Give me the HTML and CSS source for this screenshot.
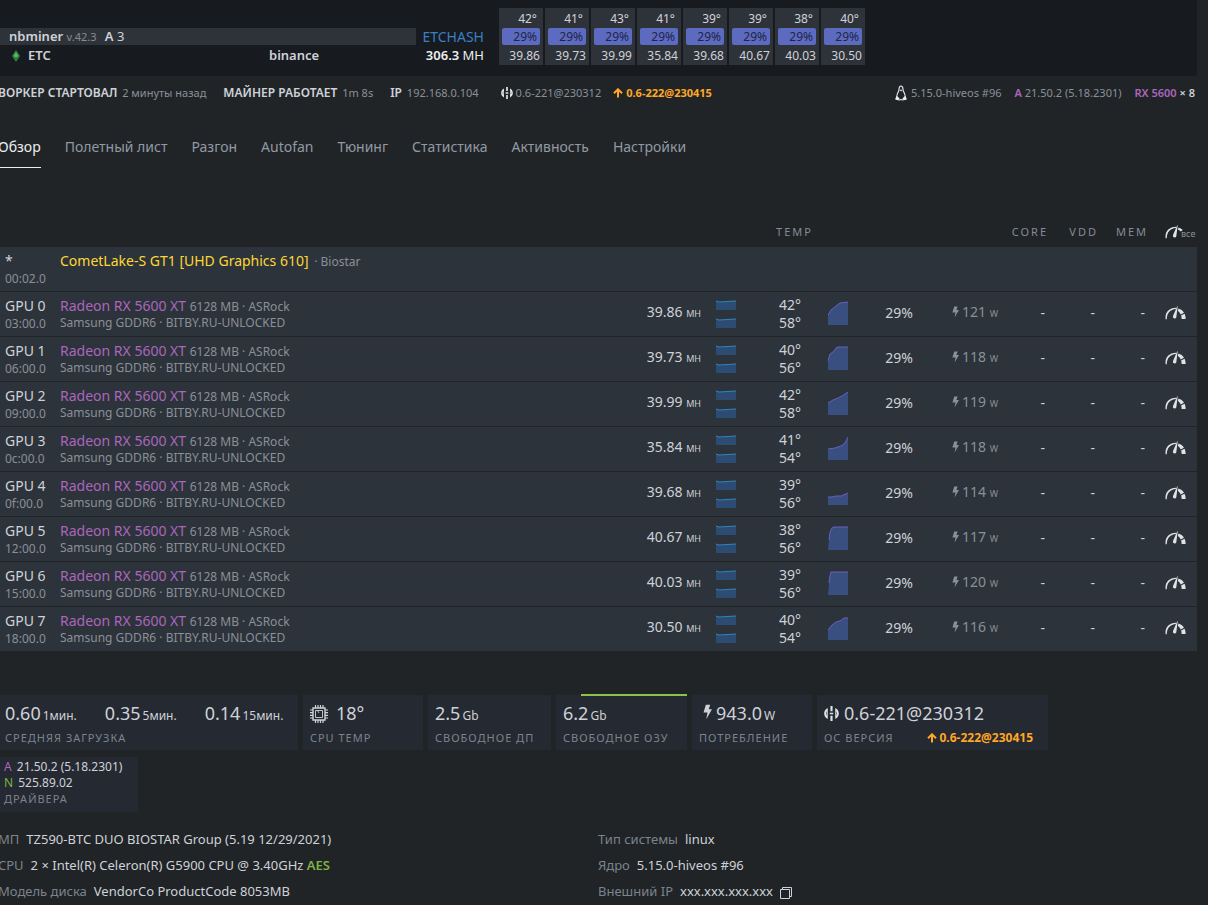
FILE: index.html
```
<!DOCTYPE html>
<html lang="ru">
<head>
    <meta charset="UTF-8">
    <meta name="viewport" content="width=device-width, initial-scale=1.0">
    <title>Hive OS | Воркер</title>
    <link rel="stylesheet" href="styles.css">
</head>
<body>
    <svg class="sprite" aria-hidden="true">
        <symbol id="i-hive" viewBox="0 0 14 14">
            <path d="M3.500 1.800V12.200C.6 10.600.2 8.600.2 7S.6 3.400 3.500 1.800zM2.600 5C1.900 6.400 1.900 7.600 2.600 9zM10.500 1.800V12.200C13.400 10.600 13.800 8.600 13.800 7S13.400 3.400 10.500 1.800zM11.400 5C12.100 6.400 12.100 7.600 11.400 9z" fill="currentColor" fill-rule="evenodd"/>
            <path d="M6 0h2v4.800H6zM6 9.200h2V14H6zM5.400 6.200h3.200v1.600H5.400z" fill="currentColor"/>
        </symbol>
        <symbol id="i-up" viewBox="0 0 10 10">
            <path d="M5 9.5V1.5M1 5.3L5 1.3l4 4" fill="none" stroke="currentColor" stroke-width="2"/>
        </symbol>
        <symbol id="i-bolt" viewBox="0 0 10 16">
            <path d="M3.2 0H8L6.4 5H10L3.6 16 5 8.6H.6z" fill="currentColor"/>
        </symbol>
        <symbol id="i-gauge" viewBox="0 0 22 16">
            <path d="M.6 14.500C-.2 7.500 4 2.800 11.600 2.600L11.400 3.900C5.600 4.400 2 8 1.900 14.500z" fill="currentColor"/>
            <path d="M13 .4L13.200 2 11.800 12.600A1.800 1.800 0 1 1 8.400 11.200z" fill="currentColor"/>
            <path d="M14 3.200C16.600 3.900 18.600 5.400 19.900 7.800L16.400 9.600C15.800 8 14.900 6.800 13.500 5.800zM20.400 8.900C21.200 10.400 21.600 12 21.600 14.200L17.400 14.400C17.400 12.800 17.200 11.800 16.800 10.700z" fill="currentColor"/>
        </symbol>
        <symbol id="i-gauge-all" viewBox="0 0 22 16">
            <path d="M.6 14.500C-.2 7.500 4 2.800 11.600 2.600L11.400 3.900C5.600 4.400 2 8 1.900 14.500z" fill="currentColor"/>
            <path d="M13 .4L13.200 2 11.800 12.600A1.800 1.800 0 1 1 8.400 11.200zM14 3.200C15.800 3.700 17.400 4.600 18.600 6L16.600 7.400C15.800 6.600 15 6 13.600 5.600z" fill="currentColor"/>
        </symbol>
        <symbol id="i-tux" viewBox="0 0 12 16">
            <path d="M6 1C3.600 1 4.200 4 3.800 5.600 3.200 7.600 1.800 9 1.800 11.500L1 14.200 4.400 15C5.400 14.400 6.600 14.400 7.600 15L11 14.200 10.200 11.500C10.200 9 8.800 7.600 8.200 5.600 7.800 4 8.400 1 6 1z" fill="none" stroke="currentColor" stroke-width="1.100"/>
            <path d="M4.400 4.800h3.200L6 6.600zM2 11l2.600 2.600L3 15.200.4 14zM10 11l-2.600 2.600L9 15.200l2.600-1.200z" fill="currentColor"/>
        </symbol>
        <symbol id="i-cpu" viewBox="0 0 18 18">
            <path d="M3 3h12v12H3z" fill="none" stroke="currentColor" stroke-width="1.400"/>
            <path d="M5.500 5.500h7v7h-7zM7.500 5.500L9 8" fill="none" stroke="currentColor" stroke-width=".9"/>
            <path d="M5.500 0v3M8 0v3M10.500 0v3M13 0v3M5.500 15v3M8 15v3M10.500 15v3M13 15v3M0 5h3M0 7.700h3M0 10.300h3M0 13h3M15 5h3M15 7.700h3M15 10.300h3M15 13h3" stroke="currentColor" stroke-width="1.200"/>
        </symbol>
        <symbol id="i-copy" viewBox="0 0 12 12">
            <path d="M.5 2.500h9v9h-9zM2.500 2.500v-2h9v9h-2" fill="none" stroke="currentColor"/>
        </symbol>
    </svg>

    <div class="page">
        <header class="summary">
            <div class="miner">
                <div class="miner-name"><b>nbminer</b> <small>v.42.3</small> <span class="accepted"><b>A</b> 3</span></div>
                <div class="algo">ETCHASH</div>
                <div class="coin">
                    <svg class="etc" viewBox="0 0 8 12"><path d="M4 0l4 6-4 6-4-6z" fill="#2e7d3c"/><path d="M4 2l2.500 4L4 7.400 1.500 6z" fill="#5cb46a"/></svg>
                    <b class="ticker">ETC</b>
                    <b>binance</b>
                </div>
                <div class="rate"><b>306.3</b> MH</div>
            </div>
            <div class="gpu-cells" id="cells"></div>
        </header>

        <div class="infobar">
            <span class="fact"><b>ВОРКЕР СТАРТОВАЛ</b> 2 минуты назад</span>
            <span class="fact"><b>МАЙНЕР РАБОТАЕТ</b> 1m 8s</span>
            <span class="fact ip"><b>IP</b> 192.168.0.104</span>
            <span class="version"><svg class="hive"><use href="#i-hive"/></svg>0.6-221@230312</span>
            <a href="#upgrade" class="upgrade"><svg class="up"><use href="#i-up"/></svg>0.6-222@230415</a>
            <span class="kernel"><svg class="tux"><use href="#i-tux"/></svg>5.15.0-hiveos #96</span>
            <span class="driver"><b class="amd">A</b> 21.50.2 (5.18.2301)</span>
            <span class="cards"><b class="amd">RX 5600</b> <b>× 8</b></span>
        </div>

        <nav class="tabs">
            <a href="#overview" class="active">Обзор</a>
            <a href="#flight">Полетный лист</a>
            <a href="#oc">Разгон</a>
            <a href="#autofan">Autofan</a>
            <a href="#tuning">Тюнинг</a>
            <a href="#stats">Статистика</a>
            <a href="#activity">Активность</a>
            <a href="#settings">Настройки</a>
        </nav>

        <table class="gpus">
            <colgroup>
                <col class="c-id"><col><col class="c-hash"><col class="c-spark"><col class="c-temp"><col class="c-chart">
                <col class="c-fan"><col class="c-power"><col class="c-oc"><col class="c-oc"><col class="c-oc"><col class="c-tune">
            </colgroup>
            <thead>
                <tr>
                    <th></th><th></th><th></th><th></th><th class="temp">TEMP</th><th></th><th></th><th></th>
                    <th class="num">CORE</th><th class="num">VDD</th><th class="num">MEM</th>
                    <th class="tune"><button type="button" aria-label="Разогнать все"><svg class="gauge"><use href="#i-gauge-all"/></svg><small>все</small></button></th>
                </tr>
            </thead>
            <tbody id="gpuRows">
                <tr>
                    <td class="id">*<small>00:02.0</small></td>
                    <td class="onboard" colspan="11"><span class="igpu">CometLake-S GT1 [UHD Graphics 610]</span> <small>· Biostar</small></td>
                </tr>
            </tbody>
        </table>

        <section class="stats">
            <div class="stat load">
                <div class="value"><span>0.60<small>1мин.</small></span><span>0.35<small>5мин.</small></span><span>0.14<small>15мин.</small></span></div>
                <div class="label">СРЕДНЯЯ ЗАГРУЗКА</div>
            </div>
            <div class="stat">
                <div class="value"><svg class="cpu"><use href="#i-cpu"/></svg>18°</div>
                <div class="label">CPU TEMP</div>
            </div>
            <div class="stat disk">
                <div class="value">2.5<small>Gb</small></div>
                <div class="label">СВОБОДНОЕ ДП</div>
            </div>
            <div class="stat ram">
                <div class="meter"><div style="width: 81%"></div></div>
                <div class="value">6.2<small>Gb</small></div>
                <div class="label">СВОБОДНОЕ ОЗУ</div>
            </div>
            <div class="stat">
                <div class="value"><svg class="bolt"><use href="#i-bolt"/></svg>943.0<small>W</small></div>
                <div class="label">ПОТРЕБЛЕНИЕ</div>
            </div>
            <div class="stat os">
                <div class="value"><svg class="hive"><use href="#i-hive"/></svg>0.6-221@230312</div>
                <div class="label">ОС ВЕРСИЯ <a href="#upgrade" class="upgrade"><svg class="up"><use href="#i-up"/></svg>0.6-222@230415</a></div>
            </div>
            <div class="stat drivers">
                <div><span class="amd">A</span> 21.50.2 (5.18.2301)</div>
                <div><span class="nvidia">N</span> 525.89.02</div>
                <div class="label">ДРАЙВЕРА</div>
            </div>
        </section>

        <dl class="system">
            <div><dt>МП</dt><dd>TZ590-BTC DUO BIOSTAR Group (5.19 12/29/2021)</dd></div>
            <div><dt>Тип системы</dt><dd>linux</dd></div>
            <div><dt>CPU</dt><dd>2 × Intel(R) Celeron(R) G5900 CPU @ 3.40GHz <b class="nvidia">AES</b></dd></div>
            <div><dt>Ядро</dt><dd>5.15.0-hiveos #96</dd></div>
            <div><dt>Модель диска</dt><dd>VendorCo ProductCode 8053MB</dd></div>
            <div><dt>Внешний IP</dt><dd>xxx.xxx.xxx.xxx <button type="button" class="copy" aria-label="Копировать"><svg><use href="#i-copy"/></svg></button></dd></div>
        </dl>
    </div>

    <script>
        // head: температура в шапке, core/mem: температуры в таблице, line: график вентилятора
        const gpus = [
            { bus: '03:00.0', hash: '39.86', head: 42, core: 42, mem: 58, power: 121, line: '0,14 3,9 8,5 12,2 20,1' },
            { bus: '06:00.0', hash: '39.73', head: 41, core: 40, mem: 56, power: 118, line: '0,15 2,8 5,6 9,1 20,1' },
            { bus: '09:00.0', hash: '39.99', head: 43, core: 42, mem: 58, power: 119, line: '0,12 5,9 10,7 14,5 20,1' },
            { bus: '0c:00.0', hash: '35.84', head: 41, core: 41, mem: 54, power: 118, line: '0,13 7,12 13,10 17,7 20,1' },
            { bus: '0f:00.0', hash: '39.68', head: 39, core: 39, mem: 56, power: 114, line: '0,16 4,16 8,15 13,15 20,12' },
            { bus: '12:00.0', hash: '40.67', head: 39, core: 38, mem: 56, power: 117, line: '1,14 2,6 4,2 6,1 20,1' },
            { bus: '15:00.0', hash: '40.03', head: 38, core: 39, mem: 56, power: 120, line: '1,12 2,5 3,1 20,1' },
            { bus: '18:00.0', hash: '30.50', head: 40, core: 40, mem: 54, power: 116, line: '0,14 4,9 8,6 12,5 16,2 20,2' }
        ];

        function spark() {
            return `<svg class="spark" viewBox="0 0 20 10">
                <path class="area" d="M0 1L3 2 20 1V10H0z"/><path class="line" d="M0 1L3 2 20 1"/></svg>`;
        }

        function fanChart(line) {
            return `<svg class="fan-chart" viewBox="0 0 20 24">
                <polygon class="area" points="0,24 ${line} 20,24"/><polyline class="line" points="${line}"/></svg>`;
        }

        document.getElementById('cells').innerHTML = gpus.map(g => `
            <div class="cell"><span>${g.head}°</span><span class="fan">29%</span><span>${g.hash}</span></div>`).join('');

        document.getElementById('gpuRows').insertAdjacentHTML('beforeend', gpus.map((g, i) => `
            <tr>
                <td class="id">GPU ${i}<small>${g.bus}</small></td>
                <td class="model"><span class="amd">Radeon RX 5600 XT</span> <small>6128 MB · ASRock</small>
                    <small class="memory">Samsung GDDR6 · BITBY.RU-UNLOCKED</small></td>
                <td class="num">${g.hash} <small>MH</small></td>
                <td class="sparks">${spark()}${spark()}</td>
                <td class="temp">${g.core}°<br>${g.mem}°</td>
                <td>${fanChart(g.line)}</td>
                <td class="num">29%</td>
                <td class="num power"><svg class="bolt"><use href="#i-bolt"/></svg>${g.power} <small>W</small></td>
                <td class="num oc">-</td>
                <td class="num oc">-</td>
                <td class="num oc">-</td>
                <td class="tune"><button type="button" aria-label="Разгон GPU ${i}"><svg class="gauge"><use href="#i-gauge"/></svg></button></td>
            </tr>`).join(''));
    </script>
</body>
</html>
```
FILE: styles.css
```
* {
    box-sizing: border-box;
}
body {
    margin: 0;
    font-family: "Noto Sans", "Open Sans", sans-serif;
    font-size: 14px;
    line-height: 18px;
    background-color: #202427;
    color: #ced2d8;
    overflow-x: hidden;
}
b {
    font-weight: 600;
}
a {
    text-decoration: none;
}
button {
    padding: 0;
    border: none;
    background: none;
    color: inherit;
    font: inherit;
    cursor: pointer;
}
svg {
    flex: none;
}
.sprite {
    position: absolute;
    width: 0;
    height: 0;
}
.page {
    margin-left: -2px;
    margin-right: 11px;
}
.amd {
    color: #ab66bd;
}
.nvidia {
    color: #7cb342;
}

/* шапка */
.summary {
    display: flex;
    align-items: flex-end;
    gap: 15px;
    height: 76px;
    padding-bottom: 11px;
    background-color: #171a1e;
    font-size: 12px;
    line-height: 19px;
}
.miner {
    display: grid;
    grid-template-columns: 418px 68px;
    font-size: 13px;
}
.miner-name {
    height: 17px;
    margin-bottom: 1px;
    padding-left: 11px;
    background-color: #2e333a;
    line-height: 17px;
}
.miner small {
    color: #858b94;
    font-size: 11px;
}
.accepted {
    margin-left: 5px;
}
.algo {
    color: #3a7fc4;
    font-size: 14px;
    line-height: 17px;
    text-align: right;
}
.coin {
    display: flex;
    align-items: center;
    padding-left: 14px;
}
.etc {
    width: 8px;
    height: 12px;
    margin-right: 8px;
}
.ticker {
    width: 241px;
}
.rate {
    color: #eceff1;
    text-align: right;
}
.gpu-cells {
    display: flex;
    gap: 2px;
}
.cell {
    display: flex;
    flex-direction: column;
    width: 44px;
    padding-top: 1px;
    background-color: #2e333a;
    text-align: right;
}
.cell span {
    padding-right: 3px;
}
.cell .fan {
    height: 17px;
    margin: 0 3px 1px;
    border-radius: 2px;
    background-color: #5c6bc0;
    color: #20264a;
    line-height: 18px;
}
.cell span:first-child {
    padding-right: 6px;
}

/* строка состояния */
.infobar {
    display: flex;
    align-items: center;
    height: 34px;
    color: #8a9099;
    font-size: 11px;
    white-space: nowrap;
}
.infobar b:not(.amd) {
    color: #ced2d8;
}
.fact {
    margin-right: 17px;
}
.fact b {
    margin-right: 2px;
    font-size: 12px;
}
.ip {
    margin-right: 22px;
}
.hive {
    width: 12px;
    height: 12px;
    margin-right: 3px;
    color: #dfe2e6;
    vertical-align: -2px;
}
.up {
    width: 10px;
    height: 10px;
    margin-right: 3px;
    vertical-align: -1px;
}
.upgrade {
    color: #ffa726;
    font-size: 11px;
    font-weight: 700;
}
.version {
    margin-right: 12px;
}
.tux {
    width: 12px;
    height: 16px;
    margin-right: 4px;
    color: #eceff1;
    vertical-align: -4px;
}
.kernel {
    margin-left: auto;
}
.driver,
.cards {
    margin-left: 13px;
}
.cards {
    padding-right: 2px;
}

/* вкладки */
.tabs {
    display: flex;
    gap: 24px;
    height: 58px;
}
.tabs a {
    padding-top: 28px;
    color: #9299a3;
    white-space: nowrap;
}
.tabs .active {
    border-bottom: 1px solid #eceff1;
    color: #eceff1;
}

/* видеокарты */
.gpus {
    width: 100%;
    margin-top: 49px;
    border-spacing: 0;
    table-layout: fixed;
}
.c-id {
    width: 62px;
}
.c-hash {
    width: 100px;
}
.c-spark {
    width: 51px;
}
.c-temp {
    width: 76px;
}
.c-chart {
    width: 35px;
}
.c-fan {
    width: 50px;
}
.c-power {
    width: 85px;
}
.c-oc {
    width: 50px;
}
.c-tune {
    width: 49px;
}
.gpus th {
    height: 30px;
    padding: 0;
    color: #858b94;
    font-size: 11px;
    font-weight: 400;
    letter-spacing: 2px;
}
.gpus td {
    height: 45px;
    padding: 0 0 2px;
    background-color: #2d333a;
    border-bottom: 1px solid #202427;
}
.gpus small {
    color: #8a9099;
    font-size: 12px;
}
.gpus .id {
    padding: 2px 0 0 7px;
}
.id small {
    display: block;
}
.gpus .model {
    padding-bottom: 0;
    line-height: 17px;
}
.model .memory {
    display: block;
    line-height: 16px;
}
.gpus .onboard {
    padding-top: 5px;
    vertical-align: top;
}
.igpu {
    margin-right: 2px;
    color: #fdd835;
}
.gpus .num {
    text-align: right;
    white-space: nowrap;
}
.gpus .num small {
    color: inherit;
    font-size: 9px;
}
.gpus .oc {
    padding-right: 3px;
}
.gpus .sparks {
    padding: 0 0 0 15px;
}
.spark {
    display: block;
    width: 20px;
    height: 10px;
}
.spark + .spark {
    margin-top: 8px;
}
.spark .area {
    fill: #2d4c74;
}
.spark .line {
    fill: none;
    stroke: #2f86bd;
}
.gpus .temp {
    padding-bottom: 0;
    text-align: center;
}
.gpus th.temp {
    padding-left: 9px;
}
.fan-chart {
    display: block;
    width: 20px;
    height: 24px;
}
.fan-chart .area {
    fill: #394f80;
}
.fan-chart .line {
    fill: none;
    stroke: #685fc0;
}
.gpus .power {
    color: #8a9099;
}
.power .bolt {
    width: 7px;
    height: 12px;
    margin-right: 3px;
    vertical-align: -1px;
}
.gpus .tune {
    padding-left: 17px;
    text-align: left;
}
.tune button {
    display: flex;
    align-items: flex-end;
    color: #dfe2e6;
}
.gauge {
    width: 21px;
    height: 16px;
}
.tune small {
    margin-left: -5px;
    font-size: 9px;
    letter-spacing: 0;
    line-height: 12px;
}

/* показатели */
.stats {
    display: flex;
    flex-wrap: wrap;
    gap: 7px 5px;
    margin-top: 43px;
    padding-right: 60px;
}
.stat {
    width: 120px;
    height: 55px;
    padding: 7px 7px 0;
    background-color: #252931;
    white-space: nowrap;
}
.value {
    height: 22px;
    font-size: 18px;
    line-height: 22px;
}
.value small {
    margin-left: 2px;
    font-size: 12px;
}
.label {
    color: #7d838c;
    font-size: 11px;
    letter-spacing: 1px;
    line-height: 28px;
}
.load {
    width: 300px;
}
.load .value {
    display: flex;
    gap: 28px;
}
.disk {
    width: 123px;
}
.ram {
    width: 131px;
}
.meter {
    margin: -8px -7px 6px;
}
.meter div {
    height: 2px;
    margin-left: auto;
    background-color: #8bc34a;
}
.os {
    width: 231px;
}
.cpu {
    width: 18px;
    height: 18px;
    margin-right: 8px;
    vertical-align: -3px;
}
.value .bolt {
    width: 9px;
    height: 16px;
    margin: 0 4px;
}
.value .hive {
    width: 15px;
    height: 15px;
    margin-right: 5px;
    vertical-align: -1px;
}
.os .label {
    display: flex;
    justify-content: space-between;
    padding-right: 8px;
}
.label .upgrade {
    font-size: 12px;
    letter-spacing: 0;
}
.drivers {
    width: 140px;
    padding: 2px 6px 0;
    font-size: 12px;
    line-height: 16px;
}
.drivers span {
    margin-right: 2px;
}
.drivers .label {
    line-height: 16px;
}

/* система */
.system {
    display: grid;
    grid-template-columns: 1fr 1fr;
    gap: 8px 1px;
    margin: 18px 0 4px;
    font-size: 13px;
}
.system div {
    display: flex;
    gap: 7px;
}
.system dt {
    color: #7d838c;
}
.system dd {
    margin: 0;
}
.copy {
    margin-left: 4px;
}
.copy svg {
    display: block;
    width: 12px;
    height: 12px;
    margin-bottom: -3px;
}
```
